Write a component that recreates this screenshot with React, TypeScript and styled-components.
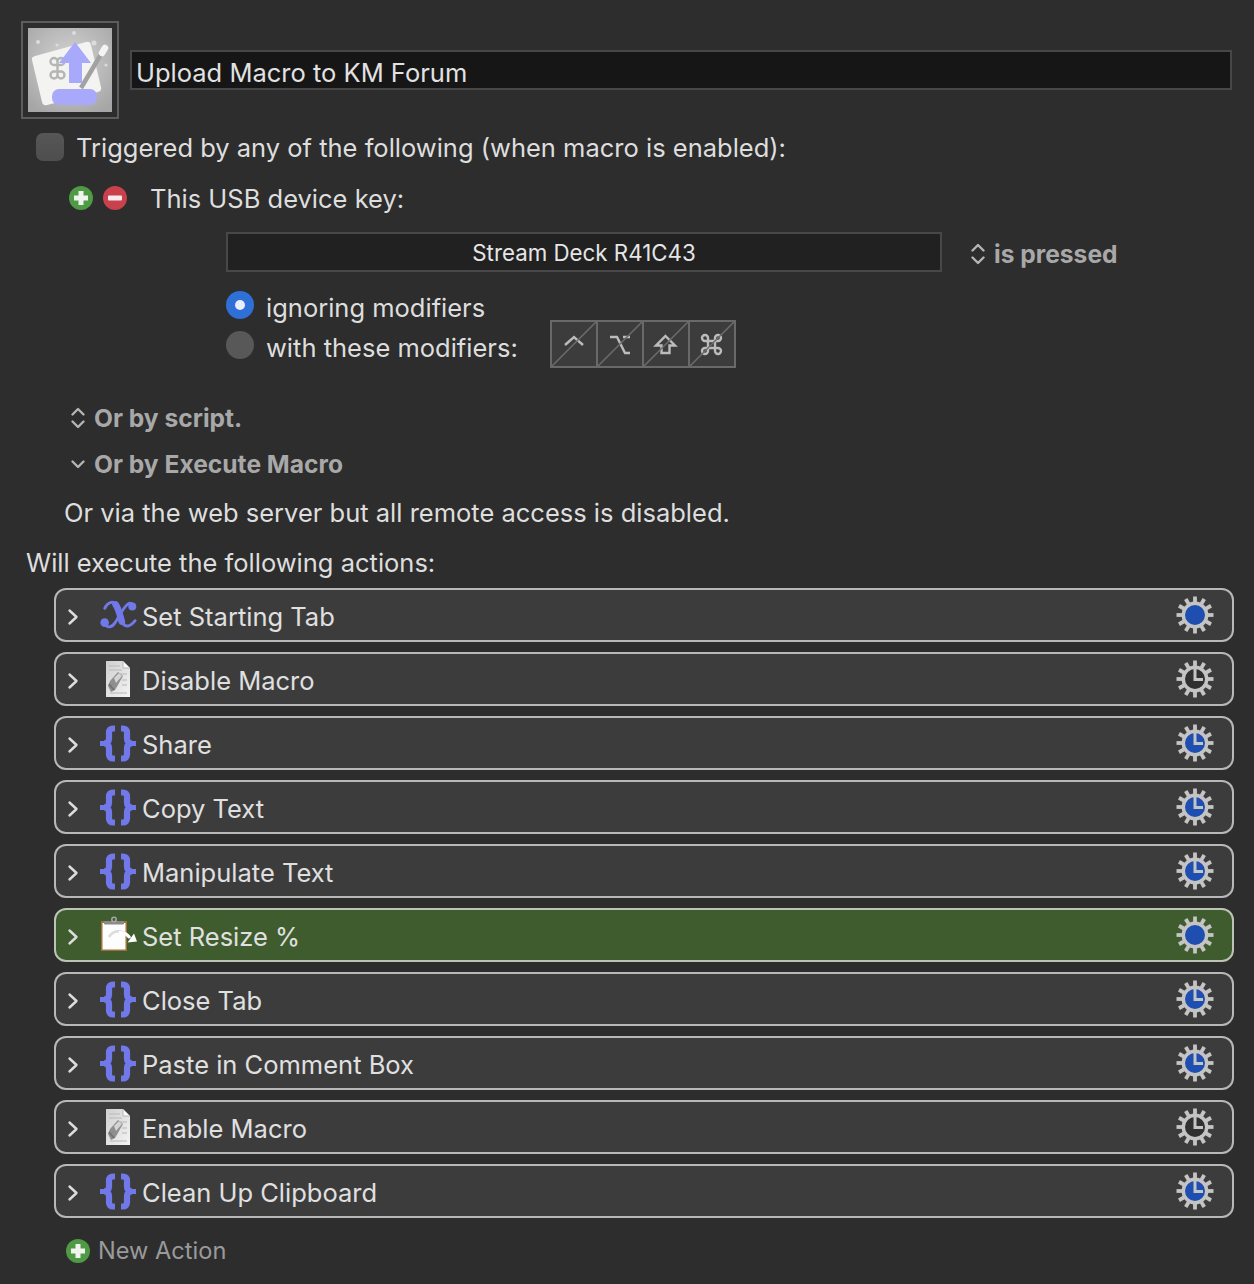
import React from 'react';
import styled, { createGlobalStyle } from 'styled-components';

const GlobalStyle = createGlobalStyle`
  html, body {
    margin: 0;
    padding: 0;
    background: #2d2d2d;
  }
  body {
    font-family: Inter, "Liberation Sans", sans-serif;
    color: #dedede;
  }
`;

const Page = styled.div`
  width: 1254px;
  height: 1284px;
  box-sizing: border-box;
  padding: 21px 22px 0 21px;
  overflow: hidden;
  background: #2d2d2d;
  font-size: 25.5px;
`;

const Header = styled.div`
  display: flex;
  align-items: center;
  gap: 11px;
  margin-bottom: 12px;
`;

const IconWell = styled.div`
  width: 98px;
  height: 98px;
  box-sizing: border-box;
  border: 2px solid #5c5c5c;
  padding: 5px;
  flex: none;
  svg { display: block; }
`;

const TitleField = styled.div`
  flex: 1;
  height: 40px;
  box-sizing: border-box;
  border: 2px solid #474747;
  background: #161616;
  padding: 0 4px;
  line-height: 41px;
  font-size: 25.5px;
  color: #e2e2e2;
  white-space: nowrap;
`;

const TriggerRow = styled.div`
  display: flex;
  align-items: center;
  gap: 12px;
  padding-left: 15px;
  height: 32px;
`;

const CheckBox = styled.div`
  width: 28px;
  height: 28px;
  border-radius: 7px;
  background: linear-gradient(#565656, #4e4e4e);
  flex: none;
`;

const KeyHeading = styled.div`
  display: flex;
  align-items: center;
  margin: 19px 0 0 48px;
  height: 32px;
`;

const RoundButton = styled.svg`
  width: 24px;
  height: 24px;
  flex: none;
  margin-right: 10px;
`;

const KeyLabel = styled.span`
  margin-left: 13px;
`;

const DeviceRow = styled.div`
  display: flex;
  align-items: center;
  margin: 18px 0 0 205px;
`;

const DeviceField = styled.div`
  width: 716px;
  height: 40px;
  box-sizing: border-box;
  border: 2px solid #484848;
  background: #212121;
  text-align: center;
  line-height: 37px;
  font-size: 22.3px;
  color: #e6e6e6;
  flex: none;
`;

const BoldLabel = styled.div`
  display: flex;
  align-items: center;
  gap: 8px;
  font-weight: 700;
  font-size: 24.6px;
  color: #a8a8a8;
  svg { flex: none; }
`;

const PressedLabel = styled(BoldLabel)`
  margin-left: 28px;
  margin-top: 3px;
`;

const ModifierBlock = styled.div`
  position: relative;
  margin: 15px 0 0 205px;
  height: 80px;
`;

const RadioRow = styled.div`
  display: flex;
  align-items: center;
  gap: 12px;
  height: 40px;
`;

const Radio = styled.div<{ $on?: boolean }>`
  width: 28px;
  height: 28px;
  border-radius: 50%;
  flex: none;
  margin-top: -4px;
  display: flex;
  align-items: center;
  justify-content: center;
  background: ${p => (p.$on ? '#2f6fd8' : '#585858')};
  &::after {
    content: '';
    width: 10px;
    height: 10px;
    border-radius: 50%;
    background: ${p => (p.$on ? '#e8eefa' : 'transparent')};
  }
`;

const ModifierKeys = styled.div`
  position: absolute;
  left: 324px;
  top: 33px;
  display: flex;
  width: 186px;
  height: 48px;
  box-sizing: border-box;
  border: 2px solid #696969;
`;

const ModifierKey = styled.div`
  flex: 1;
  position: relative;
  background: #3c3c3c;
  & + & { border-left: 2px solid #696969; }
  svg { position: absolute; inset: 0; width: 100%; height: 100%; }
`;

const ScriptRow = styled(BoldLabel)`
  margin: 33px 0 0 49px;
  height: 36px;
`;

const ExecuteRow = styled(BoldLabel)`
  margin: 10px 0 0 49px;
  height: 36px;
`;

const WebServerLine = styled.div`
  margin: 13px 0 0 43px;
  height: 36px;
  line-height: 36px;
`;

const ActionsHeading = styled.div`
  margin: 14px 0 0 5px;
  height: 36px;
  line-height: 36px;
`;

const ActionList = styled.div`
  display: flex;
  flex-direction: column;
  gap: 10px;
  margin: 7px 0 0 33px;
  width: 1180px;
`;

const ActionRow = styled.div<{ $active?: boolean }>`
  display: flex;
  align-items: center;
  height: 54px;
  box-sizing: border-box;
  border: 2px solid ${p => (p.$active ? '#bcc4b6' : '#b8b8b8')};
  border-radius: 12px;
  background: ${p => (p.$active ? '#3f5c2e' : '#3c3c3c')};
  padding: 0 18px 0 11px;
`;

const Chevron = styled.svg`
  width: 12px;
  height: 18px;
  flex: none;
  margin-top: 4px;
`;

const ActionIcon = styled.div`
  width: 40px;
  height: 44px;
  margin-left: 19px;
  flex: none;
  display: flex;
  align-items: center;
  justify-content: center;
`;

const ActionName = styled.span`
  flex: 1;
  margin-left: 4px;
  padding-top: 2px;
  font-size: 25.5px;
  color: #e0e0e0;
  white-space: nowrap;
`;

const NewAction = styled.div`
  display: flex;
  align-items: center;
  gap: 8px;
  margin: 18px 0 0 45px;
  color: #9a9a9a;
  font-size: 23.6px;
`;

const StepperIcon = () => (
  <svg width="16" height="24" viewBox="0 0 16 24" fill="none" stroke="#b4b4b4" strokeWidth="2.4" strokeLinecap="round" strokeLinejoin="round">
    <path d="M2.5 8.5 8 3l5.5 5.5M2.5 15.5 8 21l5.500-5.500" />
  </svg>
);

const DownIcon = () => (
  <svg width="16" height="24" viewBox="0 0 16 24" fill="none" stroke="#b4b4b4" strokeWidth="2.4" strokeLinecap="round" strokeLinejoin="round">
    <path d="M2.5 9.5 8 15l5.5-5.5" />
  </svg>
);

const PlusIcon = () => (
  <RoundButton viewBox="0 0 24 24">
    <circle cx="12" cy="12" r="12" fill="#4f9a44" />
    <path d="M9.500 5h5v4.500h4.500v5h-4.500v4.500h-5v-4.500h-4.500v-5h4.500z" fill="#f0f4ee" />
  </RoundButton>
);

const MinusIcon = () => (
  <RoundButton viewBox="0 0 24 24">
    <circle cx="12" cy="12" r="12" fill="#c9414c" />
    <rect x="5" y="9.500" width="14" height="5" rx="1" fill="#f6eeee" />
  </RoundButton>
);

const MacroIcon = () => (
  <svg width="84" height="84" viewBox="0 0 84 84">
    <defs>
      <radialGradient id="wellBg" cx="50%" cy="40%" r="70%">
        <stop offset="0" stopColor="#d4d4d4" />
        <stop offset="1" stopColor="#a6a6a6" />
      </radialGradient>
    </defs>
    <rect width="84" height="84" fill="url(#wellBg)" />
    <g fill="#dcdcdc">
      <circle cx="46" cy="5" r="2" />
      <circle cx="10" cy="14" r="2" />
      <circle cx="66" cy="15" r="2.500" />
      <circle cx="29" cy="17" r="1.500" />
      <circle cx="78" cy="37" r="1.500" />
    </g>
    <path d="M7 28 58 14q4-1 5 3l10 42q1 4-3 5L19 77q-4 1-5-3L4 32q-1-3 3-4z" fill="#f3f3f1" />
    <g fill="none" stroke="#b5b5b5" strokeWidth="2.400">
      <path d="M33 37h-7a3.500 3.500 0 1 1 3.500-3.500V40M33 37a3.500 3.500 0 1 0-3.500-3.500" />
      <path d="M29.500 40v7a3.500 3.500 0 1 1-3.500-3.500h7a3.500 3.500 0 1 1-3.500 3.500" />
    </g>
    <path d="M53 60 75 23" stroke="#a2a2a2" strokeWidth="4.500" />
    <path d="M74 25 77 20" stroke="#f4f4f4" strokeWidth="6.500" strokeLinecap="round" />
    <path d="M47 14 63 35H54V55H41V35H31z" fill="#a9a9fc" />
    <rect x="24" y="61" width="45" height="16" rx="7" fill="#a9a9fc" />
  </svg>
);

const ModifierGlyph = ({ d }: { d: string }) => (
  <ModifierKey>
    <svg viewBox="0 0 44 44" fill="none">
      <path d={d} stroke="#bcbcbc" strokeWidth="2.400" />
      <path d="M0 44 44 0" stroke="#6c6c6c" strokeWidth="1.500" />
    </svg>
  </ModifierKey>
);

const ScriptX = () => (
  <svg width="42" height="38" viewBox="0 0 42 38" fill="none" stroke="#7078ea" strokeLinecap="round">
    <path d="M7 12C10 6 15 4 18 7 21 10 22 16 24 23 26 31 32 34 39 25" strokeWidth="3" />
    <path d="M18.500 8C21.500 12 23 19 25 26" strokeWidth="7" />
    <path d="M7 27C9 33 14 33 18 27 22 21 26 11 32 7 34 6 37 7 38 10" strokeWidth="3" />
    <circle cx="7" cy="27" r="4.500" fill="#7078ea" stroke="none" />
    <circle cx="36" cy="10" r="4.200" fill="#7078ea" stroke="none" />
  </svg>
);

const Braces = () => (
  <svg width="36" height="38" viewBox="0 0 36 38" fill="none" stroke="#7078ea" strokeWidth="6.200">
    <path d="M15 4.500h-2c-2.500 0-4 1.500-4 4v6.500c0 3-2 4.500-5 4.500 3 0 5 1.500 5 4.500v6.500c0 2.500 1.500 4 4 4h2" />
    <path d="M21 4.500h2c2.500 0 4 1.500 4 4v6.500c0 3 2 4.500 5 4.500-3 0-5 1.500-5 4.500v6.500c0 2.500-1.500 4-4 4h-2" />
    <path d="M0 19.500h6M30 19.500h6" strokeWidth="5" />
  </svg>
);

const DocIcon = () => (
  <svg width="30" height="38" viewBox="0 0 30 38">
    <defs>
      <linearGradient id="docPaper" x1="0" y1="0" x2="1" y2="1">
        <stop offset="0" stopColor="#cfcfcf" />
        <stop offset="1" stopColor="#f4f4f4" />
      </linearGradient>
    </defs>
    <path d="M3 1h17l7 7v29H3z" fill="url(#docPaper)" />
    <path d="M20 1v7h7z" fill="#fafafa" stroke="#a8a8a8" strokeWidth="0.800" />
    <g stroke="#b8b8b8" strokeWidth="1">
      <path d="M6 6h11M6 10h13M16 14h8M19 20h5M19 25h5M7 33h17" />
    </g>
    <path d="M7 21 15 12l5 4-8 14-4 2-3-6z" fill="#8e8e8e" />
    <path d="M11 18 16 13l3 3-6 7z" fill="#d4d4d4" />
    <path d="M6 24l5 6" stroke="#6f6f6f" strokeWidth="1.500" />
  </svg>
);

const ClipIcon = () => (
  <svg width="38" height="38" viewBox="0 0 38 38">
    <rect x="2" y="5" width="26" height="30" fill="#a0703c" />
    <rect x="3.500" y="7" width="23" height="26.500" fill="#fdfdfd" />
    <rect x="5" y="5" width="20" height="3.500" rx="1" fill="#8a8a8a" />
    <circle cx="15" cy="3.500" r="2.200" fill="none" stroke="#a6a6a6" strokeWidth="1.600" />
    <path d="M10 21c4-7 13-8 20 0" fill="none" stroke="#dcdcdc" strokeWidth="2.800" />
    <path d="M20 16.500c5-.5 8 1 11 5.500" fill="none" stroke="#ffffff" strokeWidth="3" />
    <path d="M28.500 26.500l9.500-1-3-8z" fill="#ffffff" />
  </svg>
);

type GearMode = 'solid' | 'clock' | 'blueClock';

const GEAR_ANGLES = Array.from({ length: 12 }, (_, i) => i * 30);

const Gear = ({ mode }: { mode: GearMode }) => {
  const fill = mode === 'clock' ? '#303030' : '#1e4fb0';
  return (
    <svg width="38" height="38" viewBox="0 0 38 38">
      {GEAR_ANGLES.map(a => (
        <rect key={a} x="17.100" y="0.500" width="3.800" height="8" fill="#c4c4c4" transform={`rotate(${a} 19 19)`} />
      ))}
      <circle cx="19" cy="19" r="11.700" fill={fill} stroke="#c4c4c4" strokeWidth="3.400" />
      {mode !== 'solid' && (
        <path d="M19 9v10.500h8" fill="none" stroke="#c4c4c4" strokeWidth="3" />
      )}
    </svg>
  );
};

interface ActionData {
  name: string;
  icon: 'x' | 'doc' | 'braces' | 'clip';
  gear: GearMode;
  active?: boolean;
}

const ACTIONS: ActionData[] = [
  { name: 'Set Starting Tab', icon: 'x', gear: 'solid' },
  { name: 'Disable Macro', icon: 'doc', gear: 'clock' },
  { name: 'Share', icon: 'braces', gear: 'blueClock' },
  { name: 'Copy Text', icon: 'braces', gear: 'blueClock' },
  { name: 'Manipulate Text', icon: 'braces', gear: 'blueClock' },
  { name: 'Set Resize %', icon: 'clip', gear: 'solid', active: true },
  { name: 'Close Tab', icon: 'braces', gear: 'blueClock' },
  { name: 'Paste in Comment Box', icon: 'braces', gear: 'blueClock' },
  { name: 'Enable Macro', icon: 'doc', gear: 'clock' },
  { name: 'Clean Up Clipboard', icon: 'braces', gear: 'blueClock' },
];

const ICONS = {
  x: <ScriptX />,
  doc: <DocIcon />,
  braces: <Braces />,
  clip: <ClipIcon />,
};

export default function App() {
  return (
    <Page>
      <GlobalStyle />
      <Header>
        <IconWell><MacroIcon /></IconWell>
        <TitleField>Upload Macro to KM Forum</TitleField>
      </Header>
      <TriggerRow>
        <CheckBox />
        <span>Triggered by any of the following (when macro is enabled):</span>
      </TriggerRow>
      <KeyHeading>
        <PlusIcon />
        <MinusIcon />
        <KeyLabel>This USB device key:</KeyLabel>
      </KeyHeading>
      <DeviceRow>
        <DeviceField>Stream Deck R41C43</DeviceField>
        <PressedLabel><StepperIcon />is pressed</PressedLabel>
      </DeviceRow>
      <ModifierBlock>
        <RadioRow><Radio $on />ignoring modifiers</RadioRow>
        <RadioRow><Radio />with these modifiers:</RadioRow>
        <ModifierKeys>
          <ModifierGlyph d="M13 23l9-8 9 8" />
          <ModifierGlyph d="M12 15h7l8 16h5M25 15h7" />
          <ModifierGlyph d="M21.500 14 31 23.500h-5.500v7.500h-8v-7.500H12z" />
          <ModifierGlyph d="M18 19v7M25 19v7M18 19h7M18 26h7M18 19h-3a3 3 0 1 1 3-3zM25 19v-3a3 3 0 1 1 3 3zM18 26v3a3 3 0 1 1-3-3zM25 26h3a3 3 0 1 1-3 3z" />
        </ModifierKeys>
      </ModifierBlock>
      <ScriptRow><StepperIcon />Or by script.</ScriptRow>
      <ExecuteRow><DownIcon />Or by Execute Macro</ExecuteRow>
      <WebServerLine>Or via the web server but all remote access is disabled.</WebServerLine>
      <ActionsHeading>Will execute the following actions:</ActionsHeading>
      <ActionList>
        {ACTIONS.map(action => (
          <ActionRow key={action.name} $active={action.active}>
            <Chevron viewBox="0 0 12 18" fill="none" stroke="#dcdcdc" strokeWidth="2.400" strokeLinecap="round" strokeLinejoin="round">
              <path d="M2.500 2.500 9.500 9l-7 6.500" />
            </Chevron>
            <ActionIcon>{ICONS[action.icon]}</ActionIcon>
            <ActionName>{action.name}</ActionName>
            <Gear mode={action.gear} />
          </ActionRow>
        ))}
      </ActionList>
      <NewAction>
        <svg width="24" height="24" viewBox="0 0 24 24">
          <circle cx="12" cy="12" r="12" fill="#4f9a44" />
          <path d="M9.500 5h5v4.500h4.500v5h-4.500v4.500h-5v-4.500h-4.500v-5h4.500z" fill="#f0f4ee" />
        </svg>
        New Action
      </NewAction>
    </Page>
  );
}
